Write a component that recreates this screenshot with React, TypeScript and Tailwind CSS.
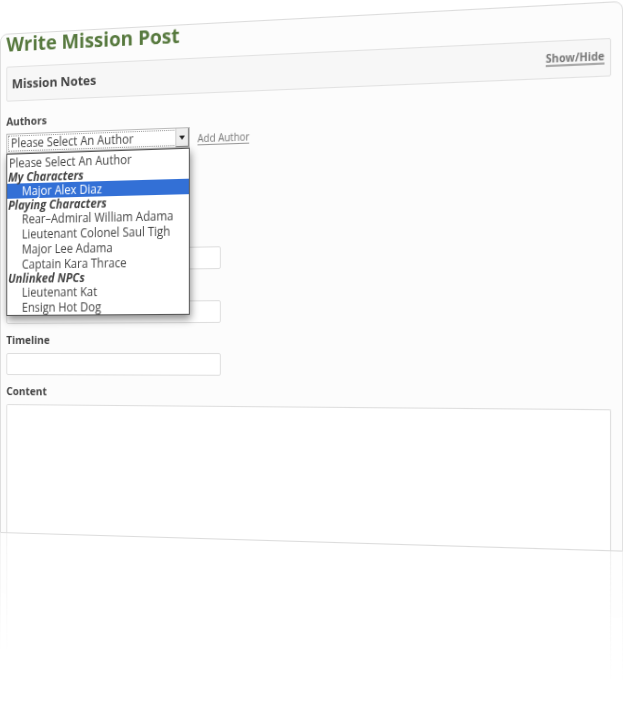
const groups = [
  { label: "My Characters", options: ["Major Alex Diaz"] },
  {
    label: "Playing Characters",
    options: [
      "Rear–Admiral William Adama",
      "Lieutenant Colonel Saul Tigh",
      "Major Lee Adama",
      "Captain Kara Thrace",
    ],
  },
  { label: "Unlinked NPCs", options: ["Lieutenant Kat", "Ensign Hot Dog"] },
];

const inputClass =
  "block h-[22px] w-[228px] rounded-xs border border-[#dedede] bg-white px-1 text-xs outline-none";
const labelClass = "block text-[11px] leading-4 font-bold";

function AuthorSelect() {
  return (
    <div className="relative w-[196px]">
      <div className="relative h-5 border border-[#bbb] bg-white p-px">
        <select
          id="authors"
          className="block h-full w-full appearance-none border border-dotted border-[#999] bg-white pl-0.5 text-xs leading-[14px] outline-none"
        >
          <option>Please Select An Author</option>
          {groups.map((group) => (
            <optgroup key={group.label} label={group.label}>
              {group.options.map((name) => (
                <option key={name}>{name}</option>
              ))}
            </optgroup>
          ))}
        </select>
        <span className="pointer-events-none absolute inset-y-0 right-0 flex w-[14px] items-center justify-center border-r border-b border-l border-r-[#888] border-b-[#888] border-l-[#ccc] bg-[#eee]">
          <svg viewBox="0 0 6 4" className="h-1 w-1.5">
            <path d="M0 0h6L3 4z" fill="#222" />
          </svg>
        </span>
      </div>
      <div
        role="listbox"
        aria-label="Authors"
        className="absolute top-full left-0 z-10 w-full border border-[#555] bg-white pt-px text-xs leading-[15px] whitespace-nowrap shadow-[1px_4px_8px_rgba(0,0,0,0.45)]"
      >
        <div role="option" aria-selected="false" className="pl-0.5">
          Please Select An Author
        </div>
        {groups.map((group) => (
          <div key={group.label} role="group" aria-label={group.label}>
            <div className="pl-px leading-[13px] font-bold italic">{group.label}</div>
            {group.options.map((name) => (
              <div
                key={name}
                role="option"
                aria-selected={name === "Major Alex Diaz"}
                className="pl-4 aria-selected:bg-[#3370d6] aria-selected:text-white"
              >
                {name}
              </div>
            ))}
          </div>
        ))}
      </div>
    </div>
  );
}

export default function App() {
  return (
    <div className="min-h-screen overflow-hidden bg-white font-['Open_Sans','Noto_Sans',sans-serif] text-[#444]">
      <div className="w-full origin-[0_353px] transform-[perspective(2800px)_rotateY(-25deg)] pt-[34px]">
        <main className="rounded-t-lg border border-[#dcdcdc] bg-[#fcfcfc] pr-[10px] pl-1.5">
          <h1 className="pt-px text-[20px] leading-[18px] font-bold text-[#57793e]">Write Mission Post</h1>
          <section className="mt-[13px] flex h-[35px] items-center justify-between rounded-xs border border-[#e2e2e2] bg-[#f7f7f7] px-[5px]">
            <h2 className="text-[13px] font-bold">Mission Notes</h2>
            <a href="#notes" className="mb-0.5 border-b-2 border-[#aaa] text-[10px] leading-3 font-bold text-[#777]">
              Show/Hide
            </a>
          </section>
          <form>
            <label htmlFor="authors" className={`${labelClass} mt-3 mb-1`}>
              Authors
            </label>
            <div className="flex items-end gap-2">
              <AuthorSelect />
              <a href="#add" className="mb-0.5 border-b border-[#999] text-[10px] leading-3 text-[#777]">
                Add Author
              </a>
            </div>
            <input aria-label="Title" className={`${inputClass} mt-24`} />
            <input aria-label="Location" className={`${inputClass} mt-[30px]`} />
            <label htmlFor="timeline" className={`${labelClass} mt-2 mb-[5px]`}>
              Timeline
            </label>
            <input id="timeline" className={inputClass} />
            <label htmlFor="content" className={`${labelClass} mt-2 mb-[5px]`}>
              Content
            </label>
            <textarea
              id="content"
              className="block h-32 w-full resize-none rounded-t-xs border border-b-0 border-[#dedede] bg-white p-1 text-xs outline-none"
            />
          </form>
        </main>
        <div
          aria-hidden="true"
          className="h-[120px] border-x border-[#f1f1f1] bg-[#fefefe] mask-b-from-0% pr-[10px] pl-1.5"
        >
          <div className="h-full border-x border-[#f1f1f1] bg-white" />
        </div>
      </div>
    </div>
  );
}
